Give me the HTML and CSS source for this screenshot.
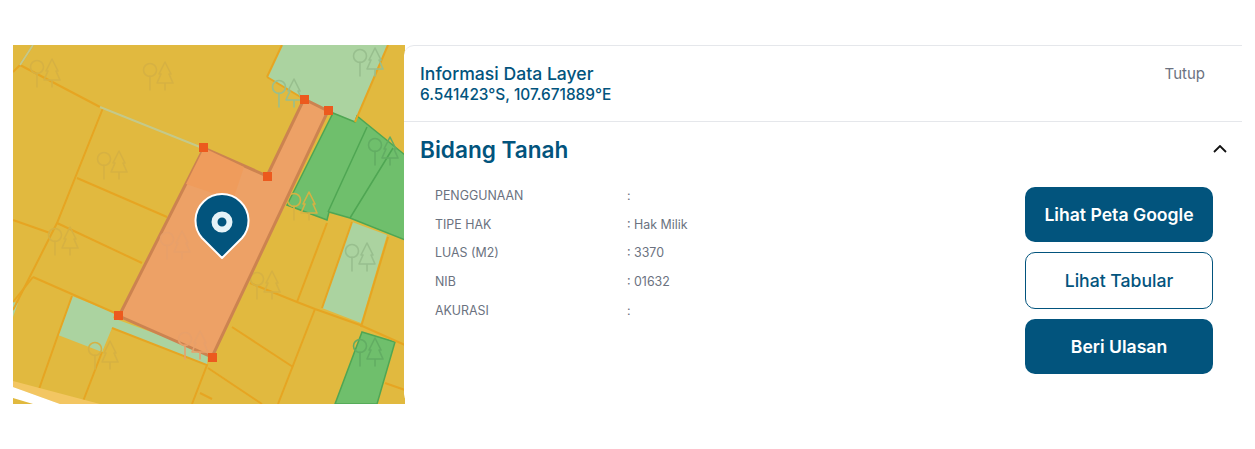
FILE: index.html
```html
<!DOCTYPE html>
<html lang="id">
<head>
    <meta charset="utf-8">
    <title>Informasi Data Layer</title>
    <link rel="stylesheet" href="styles.css">
</head>
<body>

<div class="layer_card">
  <div class="map">
    <svg viewBox="13 45 392 359" width="392" height="359" preserveAspectRatio="none">
      <defs>
        <g id="trees" fill="none" stroke-width="1.6" stroke-linejoin="round" stroke-linecap="round">
          <circle cx="7" cy="9" r="6.5"/>
          <path d="M7 15v14"/>
          <path d="M22 1l6 12h-2l4 9H14l4-9h-2zM22 22v7"/>
        </g>
      </defs>

      <g class="tiles">
        <rect x="13" y="45" width="392" height="359" class="base"/>

        <!-- pale and green parcels -->
        <g class="pale">
          <path d="M267 77L282 45H388L355 122L328 111L304 99Z"/>
          <path d="M352 222L387 235L361 323L322 308Z"/>
          <path d="M72 296L115 313L113 318L208 353L207 365L112 328L102 352L58 335Z"/>
          <path d="M13 302L18 303L13 317Z"/>
        </g>
        <g class="green">
          <path d="M333 113L355 122L357 116L405 155V240L350 218L329 212L327 220L287 205Z"/>
          <path d="M362 332L395 342L377 404H335Z"/>
        </g>
        <g class="green_line">
          <path d="M367 127L328 212M393 148L350 218"/>
        </g>

        <!-- parcel lines -->
        <g class="lines">
          <path d="M33 45L20 65L13 72"/>
          <path d="M20 65L100 107"/>
          <path d="M103 108L57 223L13 310"/>
          <path d="M77 178L167 217"/>
          <path d="M13 220L50 233"/>
          <path d="M57 223L142 263"/>
          <path d="M33 277L115 313"/>
          <path d="M33 277L13 302"/>
          <path d="M72 296L58 335L38 392"/>
          <path d="M102 352L82 404"/>
          <path d="M112 328L207 365L192 404"/>
          <path d="M200 393L212 399"/>
          <path d="M208 368L262 404"/>
          <path d="M250 283L297 302L315 309L360 325L405 345"/>
          <path d="M327 223L297 302"/>
          <path d="M315 309L278 404"/>
          <path d="M232 327L293 367"/>
          <path d="M385 383L405 390"/>
          <path d="M388 237L361 327"/>
          <path d="M352 222L322 308"/>
          <path d="M388 45L355 122"/>
          <path d="M267 77L282 45"/>
          <path d="M267 77L304 99"/>
        </g>
        <path class="pale_line" d="M100 107L200 147M33 45L20 65"/>

        <!-- road in the corner -->
        <path class="road_edge" d="M13 381L100 404H60L13 387Z"/>
        <path class="road" d="M13 387L60 404H33L13 398Z"/>

        <!-- tree marks -->
        <g class="tree_dark">
          <use href="#trees" x="30" y="58"/>
          <use href="#trees" x="143" y="61"/>
          <use href="#trees" x="97" y="150"/>
          <use href="#trees" x="48" y="226"/>
          <use href="#trees" x="250" y="270"/>
          <use href="#trees" x="88" y="340"/>
          <use href="#trees" x="287" y="191"/>
        </g>
        <g class="tree_pale">
          <use href="#trees" x="353" y="47"/>
          <use href="#trees" x="272" y="78"/>
          <use href="#trees" x="345" y="242"/>
        </g>
        <g class="tree_green">
          <use href="#trees" x="368" y="136"/>
          <use href="#trees" x="353" y="337"/>
        </g>

        <!-- selected parcel -->
        <path class="selected" d="M204 148L267 176L304 99L328 111L212 357L119 316Z"/>
        <path class="selected_top" d="M204 148L244 167L233 200L186 184Z"/>
        <g class="tree_orange">
          <use href="#trees" x="160" y="230"/>
          <use href="#trees" x="178" y="330"/>
        </g>
        <g class="vertex">
          <rect x="199" y="143" width="9" height="9"/>
          <rect x="263" y="172" width="9" height="9"/>
          <rect x="300" y="95" width="9" height="9"/>
          <rect x="324" y="106" width="9" height="9"/>
          <rect x="114" y="311" width="9" height="9"/>
          <rect x="208" y="353" width="9" height="9"/>
        </g>
      </g>

      <!-- pin -->
      <path class="pin" d="M222 258L202 238A26.5 26.5 0 1 1 242 238Z"/>
      <circle class="pin_ring" cx="222" cy="222" r="7.5"/>
    </svg>
  </div>

  <div class="panel">
    <header class="panel_head">
      <div>
        <h1>Informasi Data Layer</h1>
        <p class="coords">6.541423°S, 107.671889°E</p>
      </div>
      <span class="close">Tutup</span>
    </header>

    <div class="section_head">
      <h2>Bidang Tanah</h2>
      <svg class="chevron" viewBox="0 0 14 8" width="14" height="8"><path d="M1 7l6-6 6 6"/></svg>
    </div>

    <div class="section_body">
      <div class="attrs">
        <div class="attr"><span class="attr_name">PENGGUNAAN</span><span>:</span></div>
        <div class="attr"><span class="attr_name">TIPE HAK</span><span>: Hak Milik</span></div>
        <div class="attr"><span class="attr_name">LUAS (M2)</span><span>: 3370</span></div>
        <div class="attr"><span class="attr_name">NIB</span><span>: 01632</span></div>
        <div class="attr"><span class="attr_name">AKURASI</span><span>:</span></div>
      </div>
      <div class="actions">
        <button type="button" class="btn btn_fill">Lihat Peta Google</button>
        <button type="button" class="btn btn_line">Lihat Tabular</button>
        <button type="button" class="btn btn_fill">Beri Ulasan</button>
      </div>
    </div>
  </div>
</div>

</body>
</html>
```
FILE: styles.css
```css
body {
    margin: 0;
    background: #fff;
    font-family: Inter, "Liberation Sans", sans-serif;
}

.layer_card {
    display: flex;
    width: 1229px;
    height: 359px;
    margin: 45px 0 0 13px;
}

.map {
    width: 392px;
    flex: none;
}
.map svg { display: block; }
.tiles { filter: blur(.6px); }

.base { fill: #e1b93f; }
.pale path { fill: #abd3a0; }
.green path { fill: #6fbf6c; stroke: #4fa653; stroke-width: 1.5; }
.green_line path { fill: none; stroke: #4fa653; stroke-width: 1.5; }
.lines path { fill: none; stroke: #e6a522; stroke-width: 2; }
.pale_line { fill: none; stroke: #c4c98a; stroke-width: 2; }
.road_edge { fill: #f3c662; }
.road { fill: #fff; }
.tree_dark use { stroke: #d6b143; }
.tree_pale use { stroke: #98bf8e; }
.tree_green use { stroke: #62ad63; }
.tree_orange use { stroke: #e8a06a; }

.selected { fill: #eda166; stroke: #cc8350; stroke-width: 3; }
.selected_top { fill: #ef9c5c; }
.vertex rect { fill: #ec5a1e; }

.pin { fill: #02547d; stroke: #fff; stroke-width: 2; stroke-linejoin: round; }
.pin_ring { fill: #02547d; stroke: #e6f3f8; stroke-width: 6; }

.panel {
    flex: 1;
    background: #fff;
    border-top: 1px solid #e5e7eb;
    border-radius: 10px 0 0 10px;
    margin-left: -1px;
    position: relative;
}

.panel_head {
    display: flex;
    justify-content: space-between;
    height: 76px;
    box-sizing: border-box;
    padding: 16px 37px 0 16px;
    border-bottom: 1px solid #e5e7eb;
}
.panel_head h1 {
    margin: 0;
    font-size: 17.6px;
    line-height: 23px;
    font-weight: 500;
    color: #02547d;
}
.coords {
    margin: 0;
    font-size: 15.4px;
    line-height: 20px;
    font-weight: 500;
    color: #02547d;
}
.close {
    font-size: 15px;
    line-height: 24px;
    color: #6b7280;
}

.section_head {
    display: flex;
    justify-content: space-between;
    align-items: center;
    height: 54px;
    padding: 0 15px 2px 16px;
}
.section_head h2 {
    margin: 0;
    font-size: 22.6px;
    font-weight: 600;
    color: #02547d;
}
.chevron { fill: none; stroke: #111; stroke-width: 1.8; }

.section_body {
    display: flex;
    justify-content: space-between;
    padding: 9px 29px 0 31px;
}

.attrs {
    font-size: 12.4px;
    color: #6b7280;
    margin-top: -6px;
}
.attr {
    display: flex;
    height: 28.7px;
    align-items: center;
}
.attr_name { width: 192px; }

.actions {
    display: flex;
    flex-direction: column;
    gap: 10px;
    width: 188px;
}
.btn {
    height: 55px;
    border-radius: 10px;
    font-family: inherit;
    font-size: 17.6px;
    color: #fff;
    border: 0;
}
.btn_fill {
    background: #02547d;
    font-weight: 600;
}
.btn_line {
    height: 57px;
    background: #fff;
    border: 1px solid #02547d;
    color: #02547d;
    font-weight: 500;
}
```
